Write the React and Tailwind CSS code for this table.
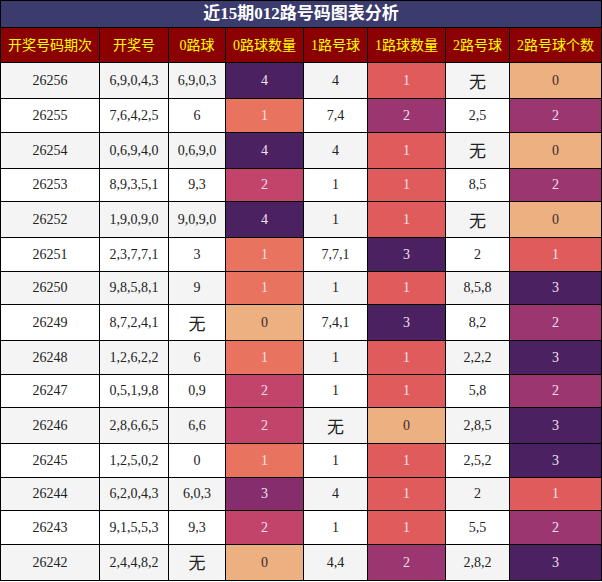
const rows = [
  ['26256', '6,9,0,4,3', '6,9,0,3', 4, '4', 1, '无', 0],
  ['26255', '7,6,4,2,5', '6', 1, '7,4', 2, '2,5', 2],
  ['26254', '0,6,9,4,0', '0,6,9,0', 4, '4', 1, '无', 0],
  ['26253', '8,9,3,5,1', '9,3', 2, '1', 1, '8,5', 2],
  ['26252', '1,9,0,9,0', '9,0,9,0', 4, '1', 1, '无', 0],
  ['26251', '2,3,7,7,1', '3', 1, '7,7,1', 3, '2', 1],
  ['26250', '9,8,5,8,1', '9', 1, '1', 1, '8,5,8', 3],
  ['26249', '8,7,2,4,1', '无', 0, '7,4,1', 3, '8,2', 2],
  ['26248', '1,2,6,2,2', '6', 1, '1', 1, '2,2,2', 3],
  ['26247', '0,5,1,9,8', '0,9', 2, '1', 1, '5,8', 2],
  ['26246', '2,8,6,6,5', '6,6', 2, '无', 0, '2,8,5', 3],
  ['26245', '1,2,5,0,2', '0', 1, '1', 1, '2,5,2', 3],
  ['26244', '6,2,0,4,3', '6,0,3', 3, '4', 1, '2', 1],
  ['26243', '9,1,5,5,3', '9,3', 2, '1', 1, '5,5', 2],
  ['26242', '2,4,4,8,2', '无', 0, '4,4', 2, '2,8,2', 3],
];

// heat colours, one scale for the 0路 column, one for 1路/2路
const zeroScale = ['bg-[#edb081]', 'bg-[#e8735f]', 'bg-[#c2446a]', 'bg-[#862d6e]', 'bg-[#4b2162]'];
const otherScale = ['bg-[#edb081]', 'bg-[#e05c5c]', 'bg-[#9b3670]', 'bg-[#4b2162]'];

const headers = ['开奖号码期次', '开奖号', '0路球', '0路球数量', '1路号球', '1路球数量', '2路号球', '2路号球个数'];
const widths = ['w-[99px]', 'w-[69px]', 'w-[57px]', 'w-[78px]', 'w-[64px]', 'w-[78px]', 'w-[64px]', 'w-[92px]'];

function Plain({ value }) {
  if (value === '无') {
    return <td className="border border-black pt-1 text-center text-[17px]">无</td>;
  }
  return <td className="border border-black text-center">{value}</td>;
}

function Heat({ value, scale }) {
  const text = value === 0 ? 'text-[#3a2a2a]' : 'text-[#f3e1ec]';
  return <td className={`border border-black text-center ${scale[value]} ${text}`}>{value}</td>;
}

export default function App() {
  return (
    <div className="w-[602px] h-[582px] overflow-hidden bg-white">
      <table
        className="w-[601px] table-fixed border-collapse border border-black text-[14px] text-[#222]"
        style={{ fontFamily: '"Liberation Serif", "Noto Sans CJK SC", serif' }}
      >
        <colgroup>
          {widths.map((w, i) => (
            <col key={i} className={w} />
          ))}
        </colgroup>
        <thead>
          <tr className="h-[27px]">
            <th
              colSpan={8}
              className="border border-black bg-[#3b3b6d] text-center text-[17px] font-bold text-white"
            >
              近15期012路号码图表分析
            </th>
          </tr>
          <tr className="h-[35px]">
            {headers.map((h) => (
              <th key={h} className="border border-black bg-[#8b0000] text-center text-[14px] font-normal text-[#ffff00]">
                {h}
              </th>
            ))}
          </tr>
        </thead>
        <tbody>
          {rows.map((r, i) => {
            const tall = r.includes('无');
            return (
              <tr key={r[0]} className={`${i % 2 === 0 ? 'bg-[#f4f4f4]' : 'bg-white'} ${tall ? 'h-[36px]' : 'h-[33.5px]'}`}>
                <Plain value={r[0]} />
                <Plain value={r[1]} />
                <Plain value={r[2]} />
                <Heat value={r[3]} scale={zeroScale} />
                <Plain value={r[4]} />
                <Heat value={r[5]} scale={otherScale} />
                <Plain value={r[6]} />
                <Heat value={r[7]} scale={otherScale} />
              </tr>
            );
          })}
        </tbody>
      </table>
    </div>
  );
}
